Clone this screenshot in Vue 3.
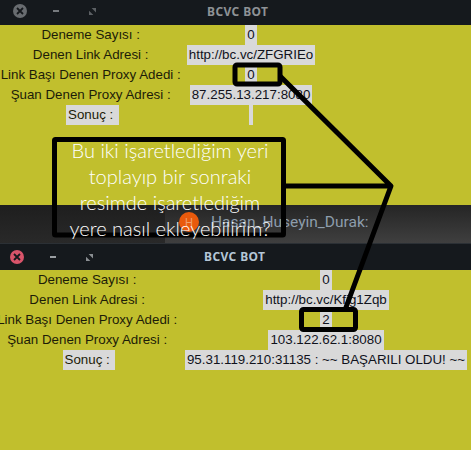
<script setup>
const topRows = [
  { label: 'Deneme Sayısı : ', value: '0' },
  { label: 'Denen Link Adresi : ', value: 'http://bc.vc/ZFGRIEo' },
  { label: 'Link Başı Denen Proxy Adedi : ', value: '0' },
  { label: 'Şuan Denen Proxy Adresi : ', value: '87.255.13.217:8080' },
  { label: 'Sonuç : ', value: '', result: true }
]
const bottomRows = [
  { label: 'Deneme Sayısı : ', value: '0' },
  { label: 'Denen Link Adresi : ', value: 'http://bc.vc/Kfjg1Zqb' },
  { label: 'Link Başı Denen Proxy Adedi : ', value: '2' },
  { label: 'Şuan Denen Proxy Adresi : ', value: '103.122.62.1:8080' },
  { label: 'Sonuç : ', value: '95.31.119.210:31135 : ~~ BAŞARILI OLDU! ~~', result: true }
]
const noteLines = [
  'Bu iki işaretlediğim yeri',
  'toplayıp bir sonraki',
  'resimde işaretlediğim',
  'yere nasıl ekleyebilirim?'
]
</script>

<template>
  <div class="page">
    <header class="bar bar-top">
      <span class="close close-idle"><svg width="8" height="8" viewBox="0 0 8 8"><path d="M1 1l6 6M7 1l-6 6" /></svg></span>
      <span class="dash"></span>
      <svg class="resize" width="7" height="7" viewBox="0 0 8 8"><path d="M3 0h5v5zM0 3l5 5H0z" /></svg>
      <span class="title">BCVC BOT</span>
    </header>
    <section class="form form-top">
      <template v-for="row in topRows" :key="row.label">
        <span class="label" :class="{ shaded: row.result }">{{ row.label }}</span>
        <span class="value" :class="{ empty: !row.value }">{{ row.value }}</span>
      </template>
    </section>

    <div class="chat">
      <div class="message">
        <span class="avatar">H</span>
        <span class="name">Hasan_Huseyin_Durak:</span>
      </div>
    </div>

    <header class="bar bar-bottom">
      <span class="close close-active"><svg width="8" height="8" viewBox="0 0 8 8"><path d="M1 1l6 6M7 1l-6 6" /></svg></span>
      <span class="dash"></span>
      <svg class="resize" width="7" height="7" viewBox="0 0 8 8"><path d="M3 0h5v5zM0 3l5 5H0z" /></svg>
      <span class="title">BCVC BOT</span>
    </header>
    <section class="form form-bottom">
      <template v-for="row in bottomRows" :key="row.label">
        <span class="label" :class="{ shaded: row.result }">{{ row.label }}</span>
        <span class="value">{{ row.value }}</span>
      </template>
    </section>

    <svg class="marks" width="471" height="450" viewBox="0 0 471 450">
      <rect x="235" y="65" width="45" height="19" rx="2" />
      <rect x="54.5" y="139.5" width="229" height="95.5" rx="1" />
      <rect x="301.5" y="309.5" width="54" height="20" rx="2" />
      <path d="M280 76L391 186L345 310M283 186H391" />
    </svg>
    <div class="note">
      <p v-for="line in noteLines" :key="line">{{ line }}</p>
    </div>
  </div>
</template>

<style>
html, body { margin: 0; background: #c1bf2d; }
</style>

<style scoped>
.page {
  position: relative;
  width: 471px;
  height: 450px;
  overflow: hidden;
  display: flex;
  flex-direction: column;
  background: #c1bf2d;
  font-family: "Liberation Sans", Arial, sans-serif;
}
.bar {
  position: relative;
  flex: none;
  display: flex;
  align-items: center;
  background: #15191d;
}
.bar-top { height: 25px; padding-left: 13px; padding-bottom: 3px; box-sizing: border-box; color: #8e9296; }
.bar-bottom {
  height: 27px;
  padding-left: 10px;
  box-sizing: border-box;
  border-top: 1px solid #2b3035;
  color: #b4c6d6;
}
.close {
  width: 14px;
  height: 14px;
  border-radius: 50%;
  display: flex;
  align-items: center;
  justify-content: center;
}
.close svg path { stroke: #15191d; stroke-width: 1.8; fill: none; }
.close-idle { background: #686c70; }
.close-active { background: #d8546a; }
.dash { width: 6px; height: 2px; margin-left: 26px; background: #767a7e; }
.resize { margin-left: 30px; }
.resize path { fill: #5c6064; }
.bar-bottom .dash { background: #9a9ea2; }
.bar-bottom .resize path { fill: #8a8e92; }
.title {
  position: absolute;
  font-family: "Noto Sans", sans-serif;
  font-weight: 700;
  font-size: 12px;
  letter-spacing: 0.4px;
}
.bar-top .title { left: 207px; top: 3px; }
.bar-bottom .title { left: 204px; top: 4px; }
.form {
  flex: none;
  height: 180px;
  display: grid;
  grid-auto-rows: 20px;
  justify-items: center;
  align-content: start;
  font-size: 13.33px;
  line-height: 20px;
  color: #1c1c08;
}
.form-top { grid-template-columns: 185px 132px; }
.form-bottom { grid-template-columns: 178px 296px; }
.label { white-space: pre; }
.shaded { background: #d9d9d9; padding: 0 2px; }
.value {
  min-width: 4px;
  padding: 0 2px;
  background: #d9d9d9;
  color: #10121c;
  white-space: pre;
}
.value.empty { padding: 0; }
.chat {
  flex: none;
  height: 38px;
  background: linear-gradient(#1e1e1e, #292929);
  display: flex;
  justify-content: flex-end;
}
.message {
  width: 306px;
  height: 38px;
  box-sizing: border-box;
  padding-left: 14px;
  display: flex;
  align-items: flex-start;
  gap: 12px;
  background: linear-gradient(#252525, #3f3f3f);
}
.avatar {
  width: 20px;
  height: 20px;
  margin-top: 7px;
  border-radius: 50%;
  background: #e95a0c;
  color: #f0a070;
  font-size: 11px;
  line-height: 20px;
  text-align: center;
}
.name {
  margin-top: 8px;
  font-family: Roboto, sans-serif;
  font-size: 15.5px;
  line-height: 18px;
  color: #8d9dac;
}
.marks {
  position: absolute;
  left: 0;
  top: 0;
  filter: blur(0.4px);
}
.marks rect, .marks path {
  fill: none;
  stroke: #000;
  stroke-width: 5;
  stroke-linejoin: round;
}
.note {
  position: absolute;
  left: 53px;
  top: 137px;
  width: 234px;
  text-align: center;
  font-family: Lato, sans-serif;
  font-size: 20px;
  font-weight: 300;
  line-height: 26px;
  color: #fff;
}
.note p { margin: 0; }
</style>
